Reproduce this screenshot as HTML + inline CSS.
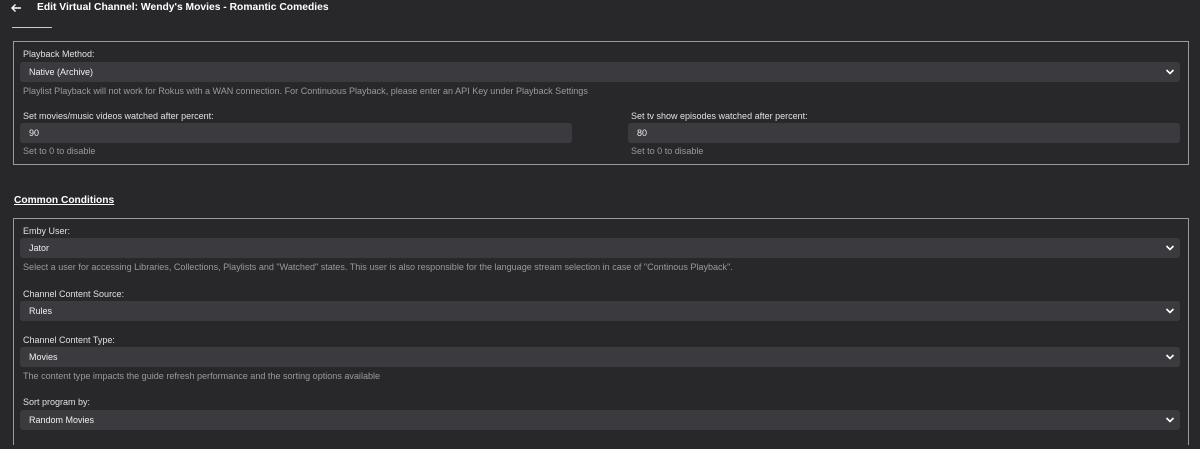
<!DOCTYPE html>
<html><head><style>
*{margin:0;padding:0;box-sizing:border-box}
body{width:1200px;height:449px;background:#28282b;font-family:"Liberation Sans",sans-serif;color:#e6e6e6;position:relative;overflow:hidden;font-size:9px}
.a{position:absolute}
.title{left:37px;top:2px;font-weight:bold;font-size:10.3px;color:#fff}
.box{border:1px solid #9a9a9a}
.lbl{color:#e0e0e0;font-size:9px}
.help{color:#9a9a9e;font-size:9.05px}
.in{background:#3a3a3f;border-radius:3px;padding-left:9px;color:#f0f0f0;font-size:9px;line-height:20px;height:20px}
.chev{position:absolute;right:5px;top:6px;width:10px;height:8px}
</style></head><body>
<svg class="a" style="left:10px;top:3px" width="12" height="10" viewBox="0 0 12 10"><path d="M11 5H2M5.5 1.5L2 5l3.5 3.5" stroke="#fff" stroke-width="1.4" fill="none"/></svg>
<div class="a title">Edit Virtual Channel: Wendy's Movies - Romantic Comedies</div>
<div class="a" style="left:12px;top:27px;width:40px;height:1px;background:#ccc"></div>
<div class="a box" style="left:13px;top:41px;width:1176px;height:124px"></div>
<div class="a lbl" style="left:23px;top:49px">Playback Method:</div>
<div class="a in" style="left:20px;top:62px;width:1160px">Native (Archive)<svg class="chev" viewBox="0 0 10 8"><path d="M1.5 2l3.5 3.5L8.5 2" stroke="#fff" stroke-width="1.6" fill="none"/></svg></div>
<div class="a help" style="left:23px;top:86px">Playlist Playback will not work for Rokus with a WAN connection. For Continuous Playback, please enter an API Key under Playback Settings</div>
<div class="a lbl" style="left:23px;top:111px">Set movies/music videos watched after percent:</div>
<div class="a in" style="left:20px;top:123px;width:552px">90</div>
<div class="a help" style="left:23px;top:146px">Set to 0 to disable</div>
<div class="a lbl" style="left:631px;top:111px">Set tv show episodes watched after percent:</div>
<div class="a in" style="left:628px;top:123px;width:552px">80</div>
<div class="a help" style="left:631px;top:146px">Set to 0 to disable</div>
<div class="a" style="left:14px;top:195px;font-weight:bold;font-size:10.2px;text-decoration:underline;color:#fff">Common Conditions</div>
<div class="a box" style="left:13px;top:218px;width:1176px;height:227px;border-bottom:none"></div>
<div class="a lbl" style="left:23px;top:226px">Emby User:</div>
<div class="a in" style="left:20px;top:238px;width:1160px">Jator<svg class="chev" viewBox="0 0 10 8"><path d="M1.5 2l3.5 3.5L8.5 2" stroke="#fff" stroke-width="1.6" fill="none"/></svg></div>
<div class="a help" style="left:23px;top:262px">Select a user for accessing Libraries, Collections, Playlists and "Watched" states. This user is also responsible for the language stream selection in case of "Continous Playback".</div>
<div class="a lbl" style="left:23px;top:289px">Channel Content Source:</div>
<div class="a in" style="left:20px;top:301px;width:1160px">Rules<svg class="chev" viewBox="0 0 10 8"><path d="M1.5 2l3.5 3.5L8.5 2" stroke="#fff" stroke-width="1.6" fill="none"/></svg></div>
<div class="a lbl" style="left:23px;top:335px">Channel Content Type:</div>
<div class="a in" style="left:20px;top:347px;width:1160px">Movies<svg class="chev" viewBox="0 0 10 8"><path d="M1.5 2l3.5 3.5L8.5 2" stroke="#fff" stroke-width="1.6" fill="none"/></svg></div>
<div class="a help" style="left:23px;top:371px">The content type impacts the guide refresh performance and the sorting options available</div>
<div class="a lbl" style="left:23px;top:397px">Sort program by:</div>
<div class="a in" style="left:20px;top:410px;width:1160px">Random Movies<svg class="chev" viewBox="0 0 10 8"><path d="M1.5 2l3.5 3.5L8.5 2" stroke="#fff" stroke-width="1.6" fill="none"/></svg></div>
</body></html>
